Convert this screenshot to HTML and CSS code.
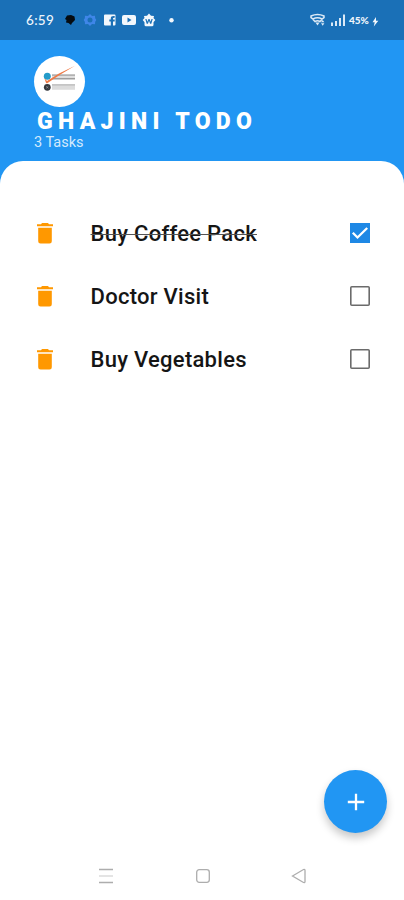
FILE: index.html
```
<!DOCTYPE html>
<html lang="en">
<head>
<meta charset="utf-8">
<title>Ghajini Todo</title>
<link rel="stylesheet" href="styles.css">
</head>
<body>
<div class="status">
  <span class="time">6:59</span>
  <svg class="notifications" width="116" height="16" viewBox="0 0 116 16">
    <path class="chat" d="M1 7 3 3.500 7 3 10.500 4.500 11 8 8 11 7 13 4.500 11 2 10.500 2.500 8Z"/>
    <path class="gear" fill-rule="evenodd" d="M26 2l2 2 3-.3.2 2.600L32.300 8l-1.100 1.700-.2 2.600-3-.3-2 2-2-2-3 .3-.2-2.600L19.700 8l1.100-1.700.2-2.600 3 .3ZM26 5.500a2.500 2.500 0 1 0 0 5 2.500 2.500 0 0 0 0-5Z"/>
    <path fill-rule="evenodd" d="M41 2.500h9.500q1 0 1 1v9q0 1-1 1H49V9.500h1.700V7.500H49V6.500q0-1 1.700-.8V4Q46.800 3.500 46.800 6.300V7.500H45.300v2h1.500v4H41q-1 0-1-1v-9q0-1 1-1Z"/>
    <path fill-rule="evenodd" d="M60 3h10q2 0 2 2v6q0 2-2 2H60q-2 0-2-2V5q0-2 2-2Zm3.500 2.500v5L67.500 8Z"/>
    <path fill-rule="evenodd" d="M85 1.500l2 2.200 3 .3-.5 2 1.800 2-1.800 2.200v2.500q0 1.500-1.500 1.500h-6q-1.500 0-1.500-1.500v-2.500L78.700 8l1.800-2L80 4l3-.3ZM81.300 7l1.400 4.700h1.200l1.100-3 1.100 3h1.200L88.700 7h-1.200l-.8 2.800L85.500 7h-1l-1.200 2.800L82.500 7Z"/>
    <circle cx="107.500" cy="8.200" r="2.200"/>
  </svg>
  <svg class="signal" width="38" height="16" viewBox="0 0 38 16">
    <g class="waves"><path d="M1 5.500V4Q7.500 1 14 4v1.500L12 7Q7.500 4.500 3 7ZM3 7.500l2 2q2.500-1.500 5 0l2-2"/></g>
    <path d="M5.500 10.500h4L7.500 13.500ZM12.700 8l1.700 2.300H11ZM12.700 13.800l1.700-2.500H11Z"/>
    <path d="M21 10.500h2V14h-2ZM25 9h2v5h-2ZM29 6h2v8h-2ZM33 2.500h2V14h-2Z"/>
  </svg>
  <span class="battery">45%</span>
  <svg class="bolt" width="7" height="10" viewBox="0 0 7 10"><path d="M4 0 .5 5.200h2.200L1.800 9.500 6.300 3.700H4Z"/></svg>
</div>
<header class="header">
  <div class="logo">
    <svg width="51" height="51" viewBox="0 0 51 51">
      <path class="bar-dark" d="M18 18.200h23v2H18ZM18 28.200h23v1.600H18Z"/>
      <path class="bar-mid" d="M18 21.700h23v1.800H18Z"/>
      <path class="bar-light" d="M18 20.200h23v1.500H18ZM18 29.800h23v4H18Z"/>
      <circle class="dot-blue" cx="13.300" cy="20.300" r="3.500"/>
      <circle class="dot-dark" cx="13.300" cy="31.300" r="3.400"/>
      <path class="dot-mark" d="M12.200 30.300l2.200 2M14.400 30.300l-2.200 2"/>
      <path class="tick" d="M10.500 22.500q1.500 1 2.500 2.500L25 17.500 41 9.700 26 18.800 14 26.700Q12 28 11.700 26Z"/>
    </svg>
  </div>
  <h1 class="title">GHAJINI TODO</h1>
  <div class="count">3 Tasks</div>
</header>
<main class="sheet">
  <ul class="tasks">
    <li class="task">
      <svg class="trash" width="16" height="21" viewBox="0 0 16 21"><path d="M0 1.200h4L5 0h6l1 1.200h4v2H0ZM1.200 4.800h13.600v13.500q0 2.300-2.300 2.300h-9q-2.300 0-2.300-2.300Z"/></svg>
      <span class="label done">Buy Coffee Pack</span>
      <svg class="box" width="20" height="20" viewBox="0 0 20 20"><path class="box-fill" d="M0 0h20v20H0Z"/><path class="check" d="M2.800 9.800 7.500 14.500 17.200 5"/></svg>
    </li>
    <li class="task">
      <svg class="trash" width="16" height="21" viewBox="0 0 16 21"><path d="M0 1.200h4L5 0h6l1 1.200h4v2H0ZM1.200 4.800h13.600v13.500q0 2.300-2.300 2.300h-9q-2.300 0-2.300-2.300Z"/></svg>
      <span class="label">Doctor Visit</span>
      <svg class="box" width="20" height="20" viewBox="0 0 20 20"><rect class="box-line" x=".8" y=".8" width="18.400" height="18.400" rx="1"/></svg>
    </li>
    <li class="task">
      <svg class="trash" width="16" height="21" viewBox="0 0 16 21"><path d="M0 1.200h4L5 0h6l1 1.200h4v2H0ZM1.200 4.800h13.600v13.500q0 2.300-2.300 2.300h-9q-2.300 0-2.300-2.300Z"/></svg>
      <span class="label">Buy Vegetables</span>
      <svg class="box" width="20" height="20" viewBox="0 0 20 20"><rect class="box-line" x=".8" y=".8" width="18.400" height="18.400" rx="1"/></svg>
    </li>
  </ul>
</main>
<button class="fab" aria-label="Add task"><svg width="18" height="18" viewBox="0 0 18 18"><path d="M9 .8v16.400M.8 9h16.400"/></svg></button>
<nav class="nav">
  <svg width="16" height="16" viewBox="0 0 16 16"><path d="M1 1.500h14M1 14.500h14"/><path class="faint" d="M1 8h14"/></svg>
  <svg width="16" height="16" viewBox="0 0 16 16"><rect x="1.700" y="1.700" width="12.600" height="12.600" rx="2.500"/></svg>
  <svg width="16" height="16" viewBox="0 0 16 16"><path d="M1.500 8 12.500 1.500q1.500-.5 1.500 1v11q0 1.500-1.500 1Z"/></svg>
</nav>
</body>
</html>
```
FILE: styles.css
```
* { box-sizing: border-box; }
body {
  margin: 0;
  height: 900px;
  display: flex;
  flex-direction: column;
  position: relative;
  overflow: hidden;
  background: #2196f3;
  font-family: Roboto, "Liberation Sans", sans-serif;
}
svg { display: block; flex: none; }
.status {
  height: 40px;
  flex: none;
  display: flex;
  align-items: center;
  padding: 0 25px 0 26px;
  background: #1a70b7;
  color: #eef5fb;
  fill: #f2f7fc;
}
.time { width: 38px; font: 500 13.5px/16px Lato, sans-serif; letter-spacing: .3px; }
.chat { fill: #050b10; }
.gear { fill: #3f86e8; }
.signal { margin-left: auto; fill: #dbe9f6; }
.waves { fill: none; stroke: #dbe9f6; stroke-width: 1.500; }
.battery { width: 22px; margin-left: 1px; font: 900 10px/14px Lato, sans-serif; }
.bolt { margin: 3px 0 0 1px; }
.header { height: 121px; flex: none; padding: 16px 34px 0; color: #fff; }
.logo { width: 51px; height: 51px; border-radius: 50%; background: #fff; }
.bar-dark { fill: #b2b2b2; }
.bar-mid { fill: #9d9d9d; }
.bar-light { fill: #dcdcdc; }
.dot-blue { fill: #249bc9; }
.dot-dark { fill: #35383d; }
.dot-mark { stroke: #8d9094; stroke-width: .8; }
.tick { fill: #ee7b48; }
.title { margin: 2px 0 0 3px; font-size: 23px; line-height: 26px; font-weight: 900; letter-spacing: 5.300px; white-space: nowrap; }
.count { margin-top: -1px; font-size: 14.500px; line-height: 17px; color: #d3eafd; }
.sheet { flex: 1; padding: 41px 34px 0 37px; background: #fff; border-radius: 23px 23px 0 0; }
.tasks { margin: 0; padding: 0; list-style: none; }
.task { height: 63px; display: flex; align-items: center; }
.trash { fill: #ff9800; }
.label { margin-left: 37.500px; font-size: 22px; line-height: 28px; font-weight: 500; letter-spacing: .28px; color: #151515; white-space: nowrap; }
.done { text-decoration: line-through 1px #555; }
.box { margin: 0 0 2px auto; }
.box-fill { fill: #1e88e5; }
.check { fill: none; stroke: #fff; stroke-width: 2.300; }
.box-line { fill: none; stroke: #6b6b6b; stroke-width: 1.600; }
.fab {
  position: absolute;
  left: 324px;
  top: 770px;
  width: 63px;
  height: 63px;
  padding: 0;
  border: 0;
  border-radius: 50%;
  display: flex;
  align-items: center;
  justify-content: center;
  background: #2196f3;
  box-shadow: 0 5px 9px rgba(0, 0, 0, .22);
}
.fab path { stroke: #fff; stroke-width: 2.300; }
.nav {
  height: 49px;
  flex: none;
  display: flex;
  justify-content: space-between;
  padding: 0 97px 0 98px;
  background: #fff;
  fill: none;
  stroke: #adadad;
  stroke-width: 1.300;
}
.faint { stroke: #d5d5d5; }
.nav svg { margin-top: 17px; }
```
